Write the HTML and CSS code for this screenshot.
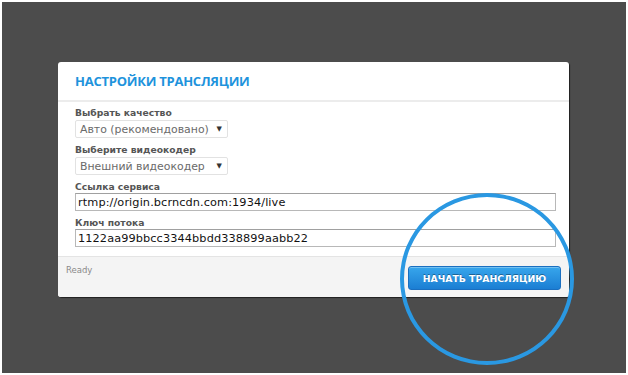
FILE: index.html
```html
<!DOCTYPE html>
<html>
<head>
<meta charset="utf-8">
<link rel="stylesheet" href="styles.css">
</head>
<body>
<div class="stage">
  <div class="card">
    <div class="card-head">НАСТРОЙКИ ТРАНСЛЯЦИИ</div>
    <div class="card-body">
      <div class="label">Выбрать качество</div>
      <div class="select"><span>Авто (рекомендовано)</span><span class="arrow">▼</span></div>
      <div class="label">Выберите видеокодер</div>
      <div class="select"><span>Внешний видеокодер</span><span class="arrow">▼</span></div>
      <div class="label">Ссылка сервиса</div>
      <div class="input">rtmp://origin.bcrncdn.com:1934/live</div>
      <div class="label">Ключ потока</div>
      <div class="input">1122aa99bbcc3344bbdd338899aabb22</div>
    </div>
    <div class="card-foot">
      <span class="status">Ready</span>
      <button class="btn">НАЧАТЬ ТРАНСЛЯЦИЮ</button>
    </div>
  </div>
  <div class="ring"></div>
</div>
</body>
</html>
```
FILE: styles.css
```css
html, body {
  margin: 0;
  padding: 0;
  background: #ffffff;
}
.stage {
  position: relative;
  margin: 2px;
  height: 371px;
  background: #4c4c4c;
  padding-top: 60px;
  box-sizing: border-box;
  overflow: hidden;
}
.card {
  margin-left: 56px;
  width: 511px;
  height: 235px;
  background: #ffffff;
  border-radius: 3px;
  box-shadow: 1px 1px 1px rgba(0,0,0,0.6);
  display: flex;
  flex-direction: column;
  overflow: hidden;
}
.card-head {
  height: 38px;
  border-bottom: 2px solid #ececec;
  padding-left: 17px;
  display: flex;
  align-items: center;
  font-family: "Open Sans", sans-serif;
  font-weight: 700;
  font-size: 13px;
  letter-spacing: -0.25px;
  color: #1e93dc;
}
.card-body {
  padding: 5px 13px 0 17px;
  flex: 1;
}
.label {
  font-family: "DejaVu Sans", Verdana, sans-serif;
  font-weight: 700;
  font-size: 9.2px;
  line-height: 12px;
  color: #555555;
  margin-top: 6px;
}
.label:first-child {
  margin-top: 0;
}
.select {
  margin-top: 1px;
  width: 153px;
  height: 18px;
  box-sizing: border-box;
  border: 1px solid #e2e2e2;
  border-radius: 2px;
  display: flex;
  align-items: center;
  justify-content: space-between;
  padding: 0 5px 0 4px;
  font-family: "DejaVu Sans", Verdana, sans-serif;
  font-size: 10.9px;
  color: #6a6a6a;
}
.arrow {
  font-size: 7px;
  color: #333333;
}
.input {
  margin-top: 0;
  width: 481px;
  height: 18px;
  box-sizing: border-box;
  border: 1px solid #b8b8b8;
  border-top-color: #a0a0a0;
  display: flex;
  align-items: center;
  padding-left: 2px;
  font-family: "DejaVu Sans", Verdana, sans-serif;
  font-size: 11.3px;
  letter-spacing: 0.1px;
  color: #111111;
}
.card-foot {
  height: 40px;
  border-top: 1px solid #e4e4e4;
  background: #f4f4f4;
  display: flex;
  justify-content: space-between;
  align-items: flex-start;
  padding: 0 8px 0 8px;
}
.status {
  margin-top: 8px;
  font-family: "DejaVu Sans", Verdana, sans-serif;
  font-size: 8.5px;
  color: #8a8a8a;
}
.btn {
  margin-top: 9px;
  width: 153px;
  height: 24px;
  border: 1px solid #1a6fc0;
  border-radius: 3px;
  background: linear-gradient(#37a6ec, #1b7ed3);
  box-shadow: inset 0 1px 0 rgba(255,255,255,0.3);
  color: #ffffff;
  font-family: "DejaVu Sans", Verdana, sans-serif;
  font-weight: 700;
  font-size: 9.3px;
  text-shadow: 0 -1px 0 rgba(0,0,0,0.35);
  padding: 0;
}
.ring {
  position: absolute;
  left: 398px;
  top: 191px;
  width: 166px;
  height: 164px;
  border: 4px solid #2a98e2;
  border-radius: 50%;
}
```
